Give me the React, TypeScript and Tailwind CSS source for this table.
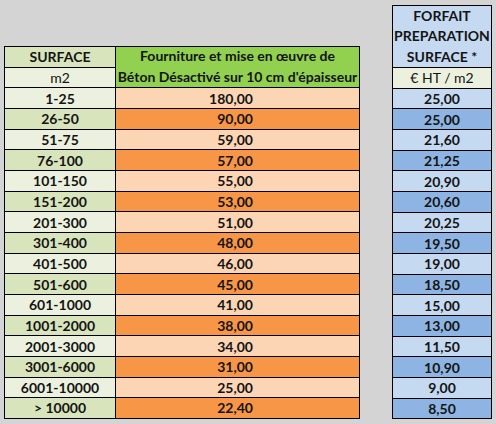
const rows: [string, string, string][] = [
  ["1-25", "180,00", "25,00"],
  ["26-50", "90,00", "25,00"],
  ["51-75", "59,00", "21,60"],
  ["76-100", "57,00", "21,25"],
  ["101-150", "55,00", "20,90"],
  ["151-200", "53,00", "20,60"],
  ["201-300", "51,00", "20,25"],
  ["301-400", "48,00", "19,50"],
  ["401-500", "46,00", "19,00"],
  ["501-600", "45,00", "18,50"],
  ["601-1000", "41,00", "15,00"],
  ["1001-2000", "38,00", "13,00"],
  ["2001-3000", "34,00", "11,50"],
  ["3001-6000", "31,00", "10,90"],
  ["6001-10000", "25,00", "9,00"],
  ["> 10000", "22,40", "8,50"],
];

export default function App() {
  return (
    <div
      className="flex h-[424px] w-[496px] items-start bg-[#d4d4d4] pl-[4px] pt-[5px] text-[14px] text-[#141414]"
      style={{ fontFamily: "Lato, 'Open Sans', sans-serif" }}
    >
      {/* Main table */}
      <div className="mt-[41px] grid grid-cols-[110px_243px] auto-rows-[19.67px] gap-px bg-black p-px">
        <div className="flex items-center justify-center bg-[#d8e4bc] font-bold">SURFACE</div>
        <div className="row-span-2 flex flex-col items-center justify-center bg-[#92d050] font-bold leading-[20.67px]">
          <span>Fourniture et mise en œuvre de</span>
          <span>Béton Désactivé sur 10 cm d'épaisseur</span>
        </div>
        <div className="flex items-center justify-center bg-[#ebf1de]">m2</div>

        {rows.map(([surface, price], i) => (
          <div key={surface} className="contents">
            <div
              className={
                i % 2 === 0
                  ? "flex items-center justify-center bg-[#ebf1de] font-bold"
                  : "flex items-center justify-center bg-[#d8e4bc] font-bold"
              }
            >
              {surface}
            </div>
            <div
              className={
                i % 2 === 0
                  ? "flex items-center justify-end bg-[#fcd5b4] pr-[106px] font-bold"
                  : "flex items-center justify-end bg-[#f79646] pr-[106px] font-bold"
              }
            >
              {price}
            </div>
          </div>
        ))}
      </div>

      {/* Forfait table */}
      <div className="ml-[32px] grid w-[100px] grid-cols-[98px] grid-rows-[61px] auto-rows-[19.67px] gap-px bg-black p-px">
        <div className="flex flex-col items-center justify-center bg-[#c5d9f1] font-bold leading-[20.67px]">
          <span>FORFAIT</span>
          <span>PREPARATION</span>
          <span>SURFACE *</span>
        </div>
        <div className="flex items-center justify-center bg-[#ebf1de]">€ HT / m2</div>
        {rows.map(([surface, , forfait], i) => (
          <div
            key={surface}
            className={
              i % 2 === 0
                ? "flex items-center justify-center bg-[#c5d9f1] font-bold"
                : "flex items-center justify-center bg-[#8db4e2] font-bold"
            }
          >
            {forfait}
          </div>
        ))}
      </div>
    </div>
  );
}
